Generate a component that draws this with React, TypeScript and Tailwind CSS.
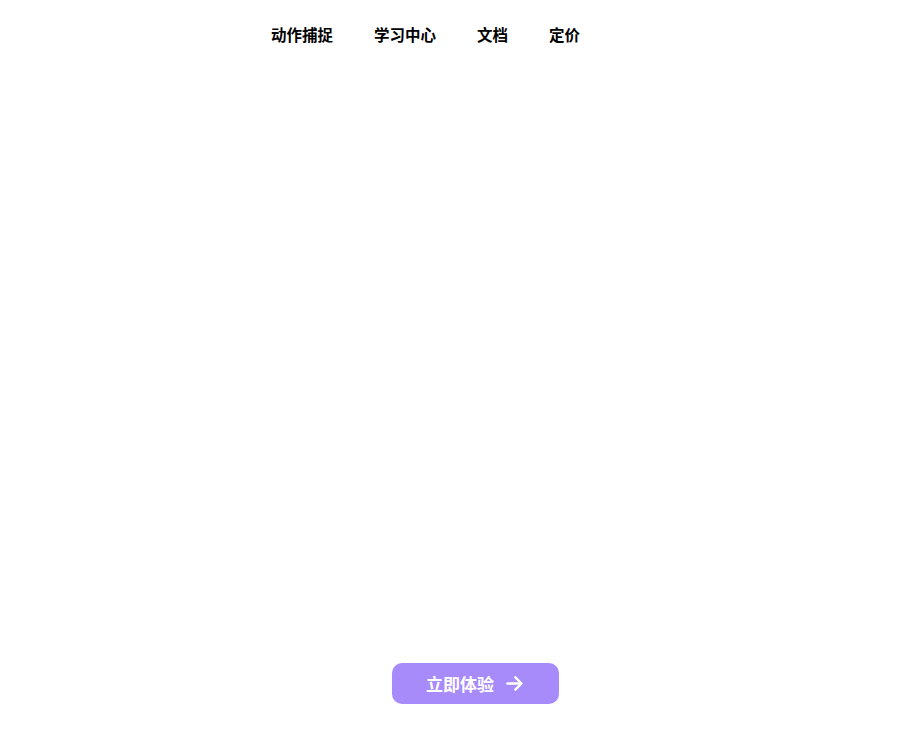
import React from "react";

export default function App() {
  const font = { fontFamily: '"Noto Sans CJK SC", "Noto Sans", sans-serif' };
  return (
    <div className="w-[900px] h-[750px] bg-white flex flex-col" style={font}>
      <nav className="flex items-center h-[69px] pl-[271px] gap-[41px] text-[15.5px] font-bold text-black">
        <span>动作捕捉</span>
        <span>学习中心</span>
        <span>文档</span>
        <span>定价</span>
      </nav>
      <div className="flex-1" />
      <div className="pl-[392px] pb-[46px]">
        <button className="flex items-center justify-center gap-[10px] w-[167px] h-[41px] rounded-[10px] bg-[#a78bfa] text-white text-[17px] font-bold">
          <span>立即体验</span>
          <svg width="21" height="21" viewBox="0 0 24 24" fill="none" stroke="currentColor" strokeWidth="2.8" strokeLinecap="round" strokeLinejoin="round">
            <path d="M4 12h15" />
            <path d="M13 5l7 7-7 7" />
          </svg>
        </button>
      </div>
    </div>
  );
}
